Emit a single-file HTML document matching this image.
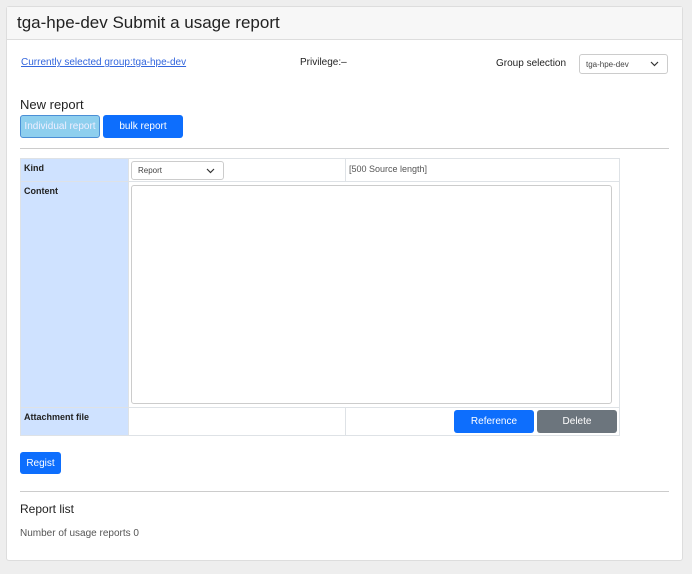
<!DOCTYPE html>
<html><head><meta charset="utf-8"><style>
*{box-sizing:border-box;margin:0;padding:0}
body{width:692px;height:574px;background:#eeeeee;font-family:"Liberation Sans",sans-serif;position:relative;overflow:hidden;color:#212529}
.a{position:absolute}
.card{left:6px;top:6px;width:677px;height:555px;background:#fff;border:1px solid #ddd;border-radius:3px}
.hdr{left:7px;top:7px;width:675px;height:33px;background:#f7f7f7;border-bottom:1px solid #ddd}
.btn{position:absolute;color:#fff;font-size:10px;display:flex;align-items:center;justify-content:center;border-radius:3px}
.sel{position:absolute;border:1px solid #ccc;border-radius:3px;background:#fff;font-size:8px;color:#444;padding-left:6px;display:flex;align-items:center}
.sel svg{position:absolute;right:8px;top:50%;margin-top:-3px}
.c{position:absolute;border:1px solid #dee2e6}
.lbl{background:#cfe2ff;font-size:9px;font-weight:bold;color:#222;padding:4px 3px}
</style></head><body>
<div class="a card"></div>
<div class="a hdr"></div>
<div class="a" style="left:17px;top:13px;font-size:17px;color:#222">tga-hpe-dev Submit a usage report</div>
<div class="a" style="left:21px;top:57px;font-size:10px;color:#3366dd;text-decoration:underline">Currently selected group:tga-hpe-dev</div>
<div class="a" style="left:300px;top:57px;font-size:10px;color:#222">Privilege:–</div>
<div class="a" style="left:496px;top:58px;font-size:10px;color:#222">Group selection</div>
<div class="sel" style="left:579px;top:54px;width:89px;height:20px">tga-hpe-dev<svg width="9" height="6"><path d="M1 1l3.5 3.5L8 1" stroke="#333" fill="none" stroke-width="1.2"/></svg></div>
<div class="a" style="left:20px;top:97px;font-size:13px;color:#222">New report</div>
<div class="btn" style="left:20px;top:115px;width:80px;height:23px;background:#8ecfee;border:1px solid #4b8fd6;color:#eef">Individual report</div>
<div class="btn" style="left:103px;top:115px;width:80px;height:23px;background:#0d6efd">bulk report</div>
<div class="a" style="left:20px;top:148px;width:649px;height:1px;background:#ccc"></div>
<div class="c lbl" style="left:20px;top:158px;width:109px;height:24px">Kind</div>
<div class="c" style="left:128px;top:158px;width:218px;height:24px"></div>
<div class="c" style="left:345px;top:158px;width:275px;height:24px;font-size:9px;color:#555;padding:5px 3px">[500 Source length]</div>
<div class="sel" style="left:131px;top:161px;width:93px;height:19px">Report<svg width="9" height="6"><path d="M1 1l3.5 3.5L8 1" stroke="#333" fill="none" stroke-width="1.2"/></svg></div>
<div class="c lbl" style="left:20px;top:181px;width:109px;height:227px">Content</div>
<div class="c" style="left:128px;top:181px;width:492px;height:227px"></div>
<div class="a" style="left:131px;top:185px;width:481px;height:219px;border:1px solid #ccc;border-radius:3px"></div>
<div class="c lbl" style="left:20px;top:407px;width:109px;height:29px">Attachment file</div>
<div class="c" style="left:128px;top:407px;width:218px;height:29px"></div>
<div class="c" style="left:345px;top:407px;width:275px;height:29px"></div>
<div class="btn" style="left:454px;top:410px;width:80px;height:23px;background:#0d6efd">Reference</div>
<div class="btn" style="left:537px;top:410px;width:80px;height:23px;background:#6c757d">Delete</div>
<div class="btn" style="left:20px;top:452px;width:41px;height:22px;background:#0d6efd">Regist</div>
<div class="a" style="left:20px;top:491px;width:649px;height:1px;background:#ccc"></div>
<div class="a" style="left:20px;top:502px;font-size:12px;color:#222">Report list</div>
<div class="a" style="left:20px;top:528px;font-size:10px;color:#555">Number of usage reports 0</div>
</body></html>
